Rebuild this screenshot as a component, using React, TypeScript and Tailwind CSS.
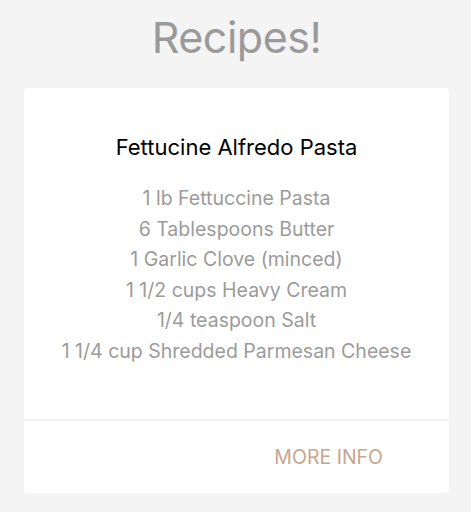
const INGREDIENTS = [
  '1 lb Fettuccine Pasta',
  '6 Tablespoons Butter',
  '1 Garlic Clove (minced)',
  '1 1/2 cups Heavy Cream',
  '1/4 teaspoon Salt',
  '1 1/4 cup Shredded Parmesan Cheese',
];

export default function App() {
  return (
    <div
      className="min-h-[512px] bg-[#f4f4f4] pl-6 pr-[22px] pt-[10px] pb-5"
      style={{ fontFamily: 'Inter, "Noto Sans", sans-serif' }}
    >
      <h1 className="text-center text-[43px] leading-[54px] text-[#9a9a9a] tracking-[-0.5px]">Recipes!</h1>

      <div className="mt-6 bg-white rounded-[3px]">
        <div className="pt-[45px] pb-[52px] text-center">
          <div className="text-[22px] leading-[28px] text-black">Fettucine Alfredo Pasta</div>
          <ul className="mt-[22px] text-[19.5px] leading-[30.6px] text-[#9b9b9b]">
            {INGREDIENTS.map(item => (
              <li key={item}>{item}</li>
            ))}
          </ul>
        </div>
        <div className="border-t-2 border-[#f1f1f1] h-[74px] flex items-center justify-end pr-[66px] pt-[3px]">
          <button className="text-[19.5px] text-[#c9a58e] uppercase">More info</button>
        </div>
      </div>
    </div>
  );
}
